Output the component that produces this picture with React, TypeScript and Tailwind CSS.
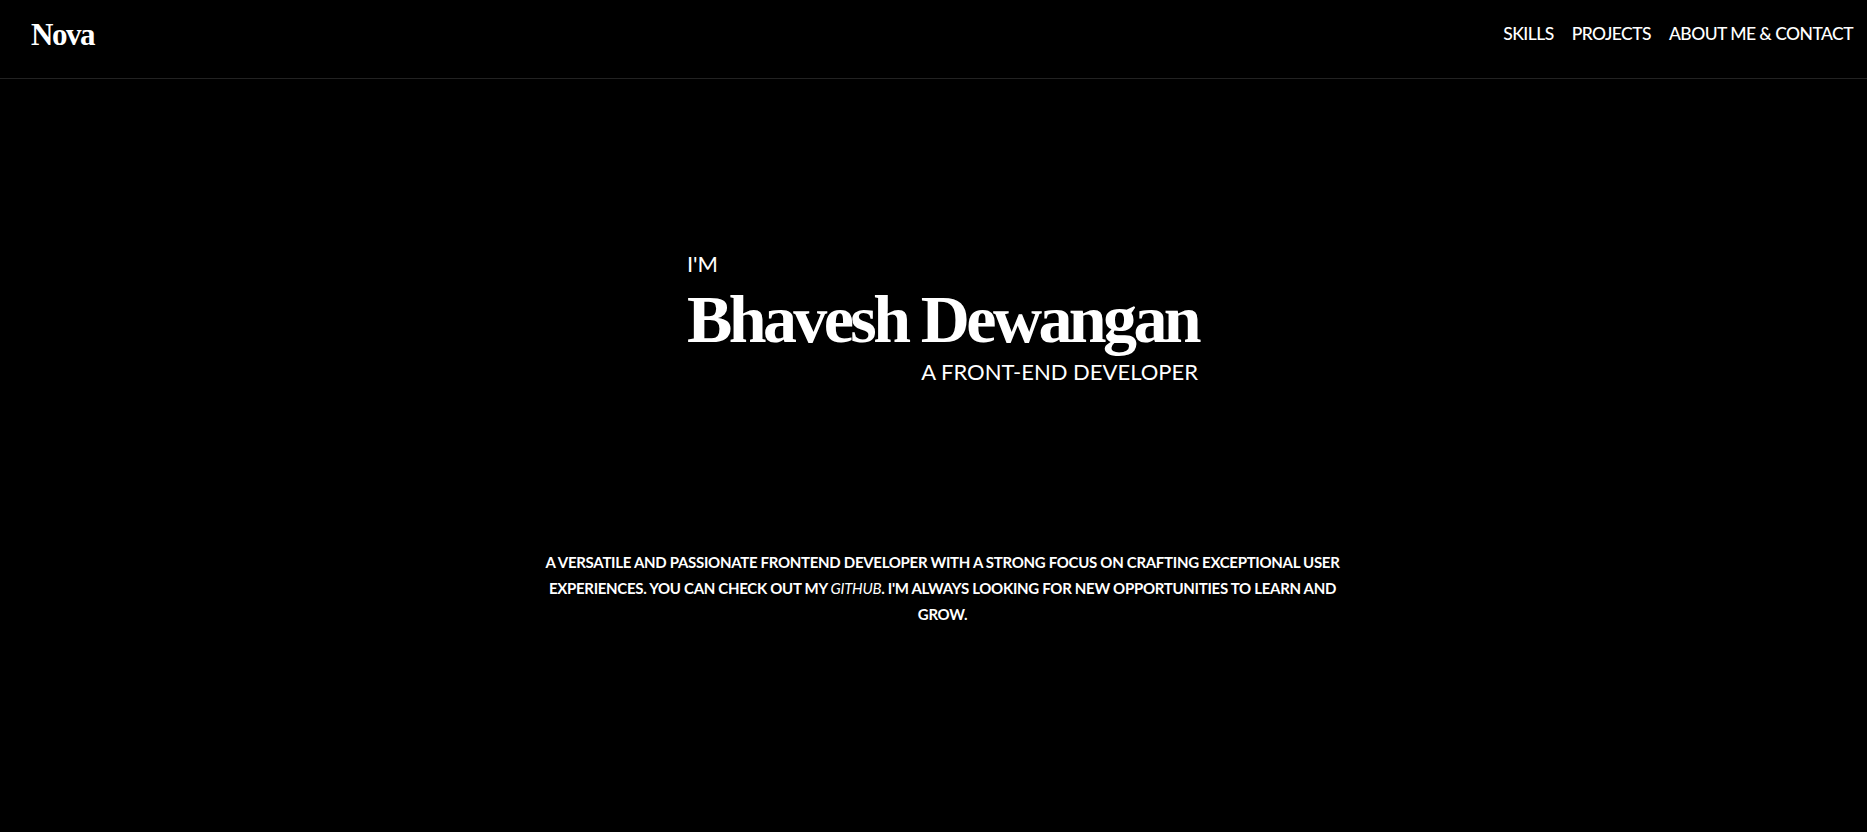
import React from 'react';

const sans = { fontFamily: 'Lato, "Open Sans", "Liberation Sans", sans-serif' };
const serif = { fontFamily: '"Liberation Serif", "DejaVu Serif", serif' };

const navLinks = ['SKILLS', 'PROJECTS', 'ABOUT ME & CONTACT'];

const App: React.FC = () => {
  return (
    <div className="min-h-screen bg-black text-white" style={sans}>
      {/* Header */}
      <header className="flex h-[79px] items-center justify-between border-b border-[#222222] pb-[10px] pl-[31px] pr-[14px]">
        <a href="#" className="text-[31px] font-bold leading-none tracking-[-1.5px]" style={serif}>
          Nova
        </a>
        <nav className="flex items-center gap-[18px] text-[17.5px] font-medium leading-none tracking-[-0.55px]">
          {navLinks.map(link => (
            <a key={link} href="#" className="hover:text-gray-300">
              {link}
            </a>
          ))}
        </nav>
      </header>

      <main className="flex flex-col items-center pl-[18px]">
        {/* Hero */}
        <section className="mt-[173px] flex w-fit flex-col">
          <span className="text-[22px] leading-[24px]">I'M</span>
          <h1 className="mt-[8px] text-[68px] font-bold leading-[70px] tracking-[-3.6px]" style={serif}>
            Bhavesh Dewangan
          </h1>
          <span className="mt-[4px] self-end text-[22px] leading-[28px]">A FRONT-END DEVELOPER</span>
        </section>

        {/* About blurb */}
        <p className="mt-[163px] max-w-[800px] text-center text-[15px] font-bold uppercase leading-[26px] tracking-[-0.3px]">
          A versatile and passionate frontend developer with a strong focus on crafting exceptional user
          experiences. You can check out my{' '}
          <a href="#" className="font-normal italic">
            GitHub
          </a>
          . I'm always looking for new opportunities to learn and grow.
        </p>
      </main>
    </div>
  );
};

export default App;
